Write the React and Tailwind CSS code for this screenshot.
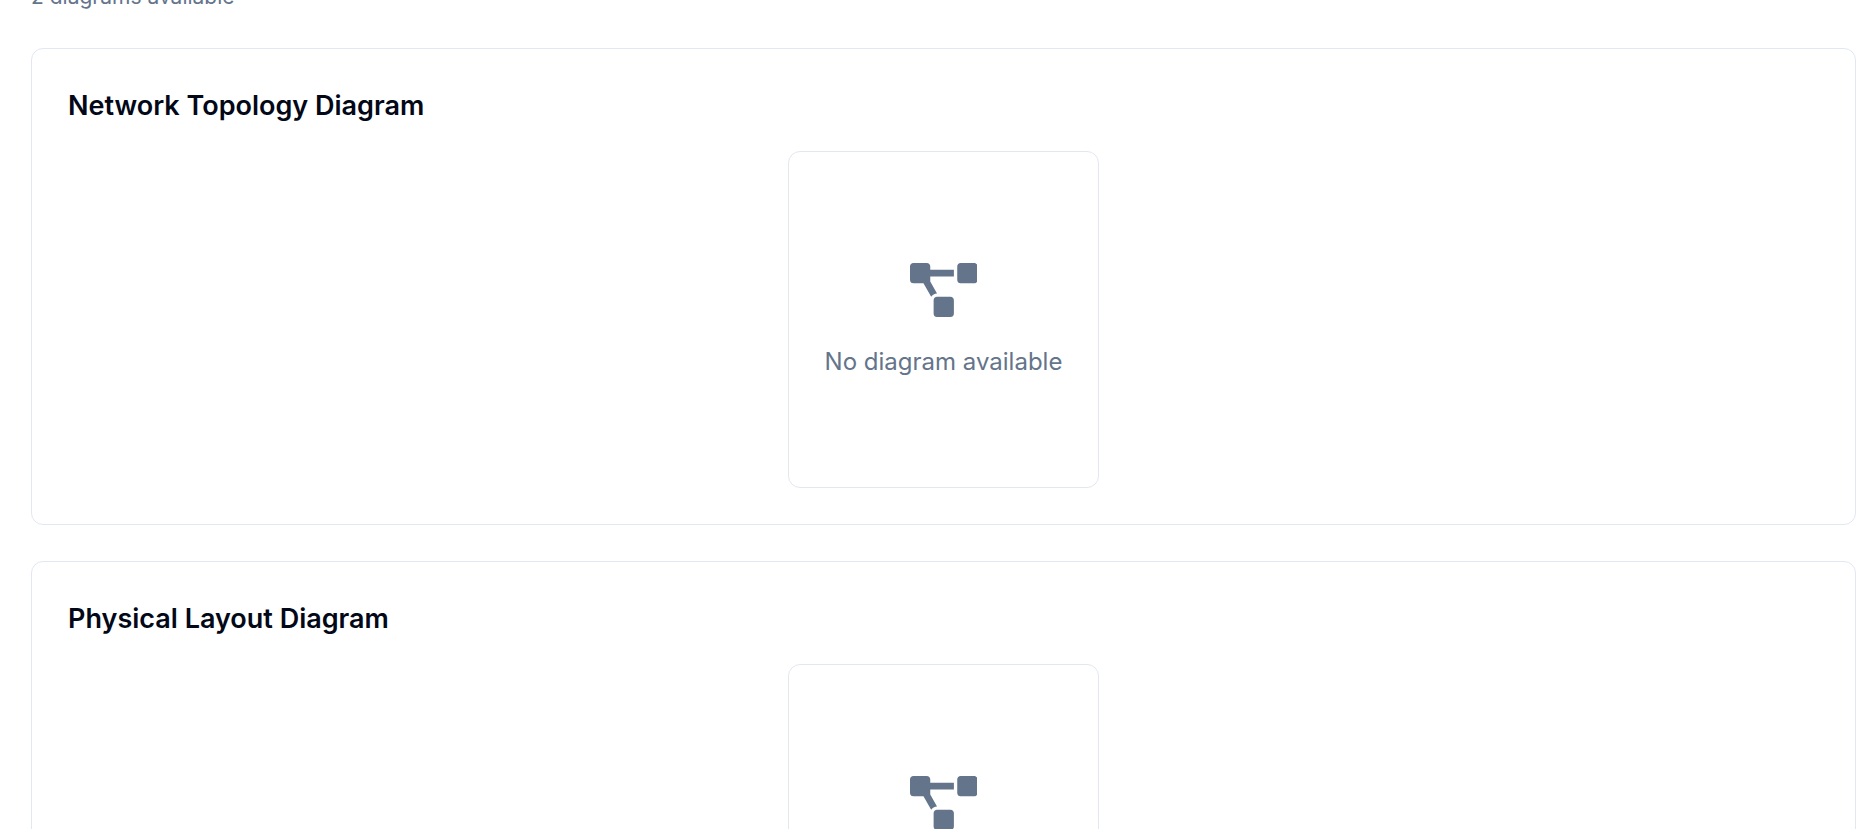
import { FaProjectDiagram } from "react-icons/fa";

const diagrams = ["Network Topology Diagram", "Physical Layout Diagram"];

function DiagramCard({ title }) {
  return (
    <section className="rounded-xl border border-[#e2e8f0] p-9">
      <h2 className="mb-6 text-[27px] leading-[42px] font-semibold text-[#020817]">{title}</h2>
      <div className="flex justify-center">
        <div className="flex flex-col items-center gap-[27px] rounded-xl border border-[#e2e8f0] px-9 pt-[111px] pb-[107px] text-[#64748b]">
          <FaProjectDiagram className="aspect-[5/4] h-[54px] w-auto" aria-hidden="true" />
          <p className="text-[24px] leading-9">No diagram available</p>
        </div>
      </div>
    </section>
  );
}

export default function App() {
  return (
    <main className="h-screen overflow-hidden bg-white pr-[5px] pl-[31px] font-['Inter',sans-serif]">
      <p className="-mt-[18px] mb-9 text-[21px] leading-[30px] text-[#64748b]">
        {diagrams.length} diagrams available
      </p>
      <div className="flex flex-col gap-9">
        {diagrams.map((title) => (
          <DiagramCard key={title} title={title} />
        ))}
      </div>
    </main>
  );
}
